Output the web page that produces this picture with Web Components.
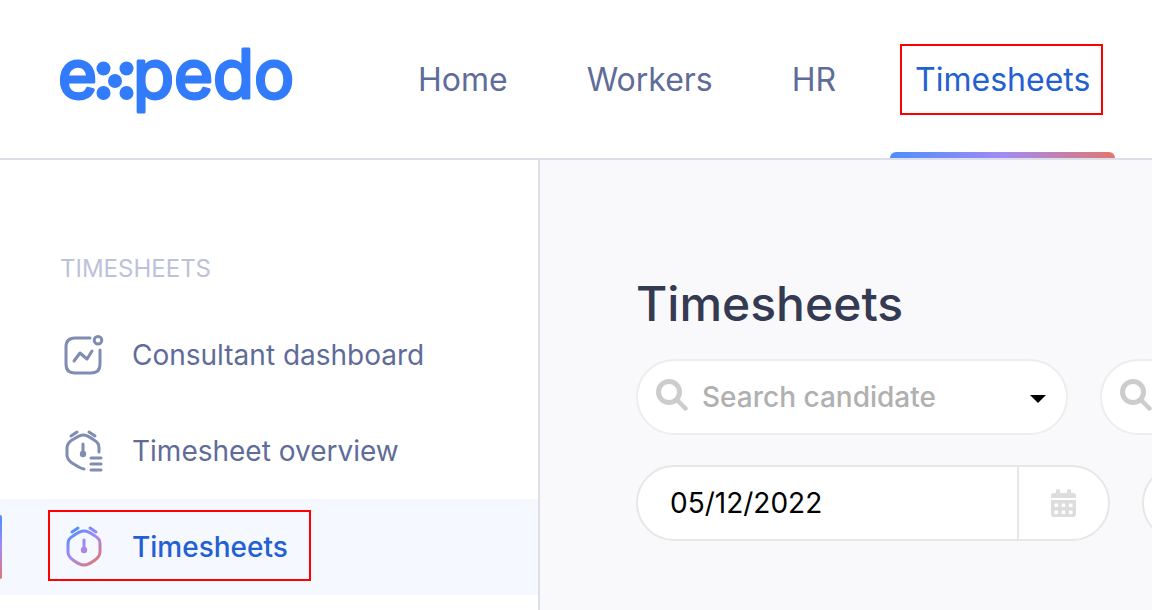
<!DOCTYPE html>
<html lang="en">
<head>
<meta charset="utf-8">
<meta name="viewport" content="width=device-width, initial-scale=1">
<title>Timesheets - expedo</title>
<style>
  body {
    margin: 0;
    background: #f9f9fc;
    font-family: Inter, "Liberation Sans", sans-serif;
    --text: #5f6c99;
    --muted: #bcc2d8;
    --icon: #808cb3;
    --active: #2360d2;
    --line: #dcdfea;
    --mark: #ff0000;
  }
</style>
</head>
<body>
<expedo-app>
  <expedo-logo slot="header"></expedo-logo>
  <nav-bar slot="header">
    <nav-tab href="#home">Home</nav-tab>
    <nav-tab href="#workers">Workers</nav-tab>
    <nav-tab href="#hr">HR</nav-tab>
    <nav-tab href="#timesheets" active>Timesheets</nav-tab>
  </nav-bar>

  <side-menu slot="sidebar" heading="Timesheets">
    <side-item href="#dashboard" icon="dashboard">Consultant dashboard</side-item>
    <side-item href="#overview" icon="overview">Timesheet overview</side-item>
    <side-item href="#timesheets" icon="clock" active>Timesheets</side-item>
  </side-menu>

  <page-title>Timesheets</page-title>
  <filter-row>
    <search-select label="Candidate" placeholder="Search candidate"></search-select>
    <search-select label="Client" placeholder="Search client"></search-select>
  </filter-row>
  <filter-row>
    <date-field label="From date" value="05/12/2022"></date-field>
    <date-field label="To date" value="11/12/2022"></date-field>
  </filter-row>
</expedo-app>

<script>
function define(name, html, setup) {
  const template = document.createElement("template");
  template.innerHTML = html;

  window.customElements.define(
    name,
    class extends HTMLElement {
      constructor() {
        super();
        this.attachShadow({ mode: "open" });
        this.shadowRoot.appendChild(template.content.cloneNode(true));
      }

      connectedCallback() {
        if (setup) {
          setup(this, this.shadowRoot);
        }
      }
    }
  );
}

const icons = {
  dashboard: `
    <path d="M28 5H13Q4 5 4 14V31Q4 40 13 40H29Q38 40 38 31V17"/>
    <circle cx="36" cy="7.300" r="3.800"/>
    <path d="M12 28L18 20L25 26L30 18"/>`,
  overview: `
    <path d="M22 40C19 40 15 37 10 34C6 31 5 29 5 26V19C5 15 7 13 10 11C15 8 18 6 21 6C24 6 28 8 32 11C36 13 37 16 37 19V23"/>
    <path d="M9 7L15 3M27 3L33 7M21 15V24M29 29H39M29 35H39M29 41H39"/>
    <circle class="dot" cx="21" cy="25" r="3.200"/>`,
  clock: `
    <defs>
      <linearGradient id="g" gradientUnits="userSpaceOnUse" x1="8" y1="4" x2="36" y2="38">
        <stop offset="0" stop-color="#4d8ffb"/>
        <stop offset=".5" stop-color="#a18af4"/>
        <stop offset="1" stop-color="#e2766f"/>
      </linearGradient>
    </defs>
    <path d="M22 6C25 6 29 8 33 11C37 13 38 16 38 19V27C38 30 37 32 33 35C29 38 25 40 22 40C19 40 15 38 11 35C7 32 6 30 6 27V19C6 16 7 13 11 11C15 8 19 6 22 6Z"/>
    <path d="M10 7L16 3M28 3L34 7M22 15V24"/>
    <circle class="dot" cx="22" cy="25" r="3.200"/>`,
};

define("expedo-app", `
  <style>
    :host {
      display: flex;
      flex-direction: column;
      min-height: 100vh;
      overflow: hidden;
    }
    header {
      display: flex;
      align-items: center;
      gap: 95px;
      padding-left: 60px;
      background: #fff;
      border-bottom: 2px solid var(--line);
    }
    .body {
      display: flex;
      flex: 1;
    }
    aside {
      flex: 0 0 538px;
      background: #fff;
      border-right: 2px solid var(--line);
    }
    main {
      flex: 1;
      min-width: 0;
      padding: 114px 0 0 96px;
    }
  </style>
  <header><slot name="header"></slot></header>
  <div class="body">
    <aside><slot name="sidebar"></slot></aside>
    <main><slot></slot></main>
  </div>
`);

define("expedo-logo", `
  <style>
    :host {
      display: block;
      flex: none;
    }
    a, svg {
      display: block;
    }
    svg {
      fill: #327bfa;
      overflow: visible;
    }
    text {
      font: 400 67px Inter, sans-serif;
      stroke: #327bfa;
      stroke-width: 3;
      stroke-linejoin: round;
    }
  </style>
  <a href="#" aria-label="expedo">
    <svg width="238" height="64" viewBox="0 0 238 64">
      <text x="-2" y="51">e</text>
      <circle cx="43.500" cy="21.500" r="7"/>
      <circle cx="66.500" cy="21.500" r="7"/>
      <circle cx="55" cy="34" r="7"/>
      <circle cx="43.500" cy="46" r="7"/>
      <circle cx="66.500" cy="46" r="7"/>
      <text x="73" y="51">pedo</text>
    </svg>
  </a>
`);

define("nav-bar", `
  <style>
    :host {
      display: block;
    }
    nav {
      display: flex;
      gap: 29px;
    }
  </style>
  <nav><slot></slot></nav>
`);

define("nav-tab", `
  <style>
    :host {
      display: block;
      position: relative;
      padding: 2px 25px 0;
      color: var(--text);
      font-size: 32px;
      line-height: 156px;
    }
    a {
      color: inherit;
      text-decoration: none;
    }
    :host([active]) {
      color: var(--active);
    }
    :host([active])::before {
      content: "";
      position: absolute;
      left: 0;
      right: 0;
      bottom: 0;
      height: 6px;
      border-radius: 6px 6px 0 0;
      background: linear-gradient(90deg, #4d8ffb, #a18af4 50%, #e2766f);
    }
    :host([active])::after {
      content: "";
      position: absolute;
      inset: 44px 12px 43px 10px;
      border: 2px solid var(--mark);
      pointer-events: none;
    }
  </style>
  <a><slot></slot></a>
`, (el, root) => {
  root.querySelector("a").href = el.getAttribute("href");
});

define("side-menu", `
  <style>
    :host {
      display: block;
      padding-top: 93px;
    }
    h2 {
      margin: 0 0 22px;
      padding-left: 60px;
      color: var(--muted);
      font-size: 24px;
      font-weight: 400;
      line-height: 32px;
      text-transform: uppercase;
    }
  </style>
  <h2></h2>
  <nav><slot></slot></nav>
`, (el, root) => {
  root.querySelector("h2").textContent = el.getAttribute("heading");
});

define("side-item", `
  <style>
    :host {
      display: flex;
      position: relative;
      align-items: center;
      height: 96px;
      padding-left: 62px;
      color: var(--text);
      font-size: 28px;
      line-height: 36px;
      --stroke: var(--icon);
    }
    a {
      display: flex;
      position: relative;
      align-items: center;
      gap: 26px;
      color: inherit;
      text-decoration: none;
    }
    svg {
      fill: none;
      stroke: var(--stroke);
      stroke-width: 3;
      stroke-linecap: round;
      stroke-linejoin: round;
    }
    svg .dot {
      fill: var(--stroke);
      stroke: none;
    }
    :host([active]) {
      background: #f5f8ff;
      color: var(--active);
      font-weight: 500;
      --stroke: url(#g);
    }
    :host([active])::before {
      content: "";
      position: absolute;
      left: 0;
      top: 16px;
      bottom: 16px;
      width: 2px;
      border-radius: 0 2px 2px 0;
      background: linear-gradient(#4d8ffb, #a18af4 50%, #e2766f);
    }
    :host([active]) a::after {
      content: "";
      position: absolute;
      inset: -15px -23px -12px -14px;
      border: 2px solid var(--mark);
      pointer-events: none;
    }
  </style>
  <a>
    <svg width="44" height="44" viewBox="0 0 44 44" aria-hidden="true"></svg>
    <span><slot></slot></span>
  </a>
`, (el, root) => {
  root.querySelector("a").href = el.getAttribute("href");
  root.querySelector("svg").innerHTML = icons[el.getAttribute("icon")];
});

define("page-title", `
  <style>
    :host {
      display: block;
      margin-bottom: 25px;
    }
    h1 {
      margin: 0;
      color: #343a52;
      font-size: 48px;
      font-weight: 500;
      line-height: 60px;
    }
  </style>
  <h1><slot></slot></h1>
`);

define("filter-row", `
  <style>
    :host {
      display: flex;
      gap: 32px;
      margin-bottom: 30px;
    }
  </style>
  <slot></slot>
`);

define("search-select", `
  <style>
    :host {
      display: flex;
      flex: 0 0 432px;
      align-items: center;
      box-sizing: border-box;
      height: 76px;
      padding: 0 20px 0 18px;
      border: 2px solid #ededed;
      border-radius: 38px;
      background: #fff;
    }
    svg {
      flex: none;
      pointer-events: none;
    }
    select {
      appearance: none;
      flex: 1;
      min-width: 0;
      height: 100%;
      margin: 0;
      padding: 0 0 0 14px;
      border: 0;
      outline: 0;
      background: none;
      color: #b0b0b0;
      font: 500 28px Inter, "Liberation Sans", sans-serif;
    }
  </style>
  <svg width="32" height="36" viewBox="0 0 32 36" fill="none" stroke="#ccc" stroke-width="5" aria-hidden="true">
    <circle cx="13" cy="13" r="10.500"/>
    <path d="M21 21L29.500 29.500" stroke-linecap="round" stroke-width="4.500"/>
  </svg>
  <select><option></option></select>
  <svg width="16" height="12" viewBox="0 0 16 12" aria-hidden="true">
    <path d="M0 4H16L8 12Z"/>
  </svg>
`, (el, root) => {
  root.querySelector("select").setAttribute("aria-label", el.getAttribute("label"));
  root.querySelector("option").textContent = el.getAttribute("placeholder");
});

define("date-field", `
  <style>
    :host {
      display: flex;
      flex: 0 0 474px;
      box-sizing: border-box;
      height: 76px;
      border: 2px solid #e7e7e7;
      border-radius: 38px;
      background: #fff;
      overflow: hidden;
    }
    input {
      flex: 1;
      min-width: 0;
      margin: 0;
      padding: 0 32px;
      border: 0;
      outline: 0;
      background: none;
      color: #000;
      font: 400 28px Inter, "Liberation Sans", sans-serif;
    }
    button {
      display: flex;
      flex: 0 0 91px;
      align-items: center;
      justify-content: center;
      margin: 0;
      padding: 0;
      border: 0;
      border-left: 2px solid #e7e7e7;
      background: none;
    }
  </style>
  <input type="text">
  <button type="button" aria-label="Open calendar">
    <svg width="25" height="28" viewBox="0 0 25 28" fill="#ddd">
      <path d="M5 4V1.500Q5 0 7 0Q9 0 9 1.500V4H16V1.500Q16 0 18 0Q20 0 20 1.500V4H22Q25 4 25 7V9H0V7Q0 4 3 4Z"/>
      <path fill-rule="evenodd" d="M0 11H25V25Q25 28 22 28H3Q0 28 0 25ZM3.500 14.500V18H7V14.500ZM10.700 14.500V18H14.200V14.500ZM18 14.500V18H21.500V14.500ZM3.500 21.500V25H7V21.500ZM10.700 21.500V25H14.200V21.500ZM18 21.500V25H21.500V21.500Z"/>
    </svg>
  </button>
`, (el, root) => {
  const input = root.querySelector("input");
  input.setAttribute("aria-label", el.getAttribute("label"));
  input.value = el.getAttribute("value");
});
</script>
</body>
</html>
